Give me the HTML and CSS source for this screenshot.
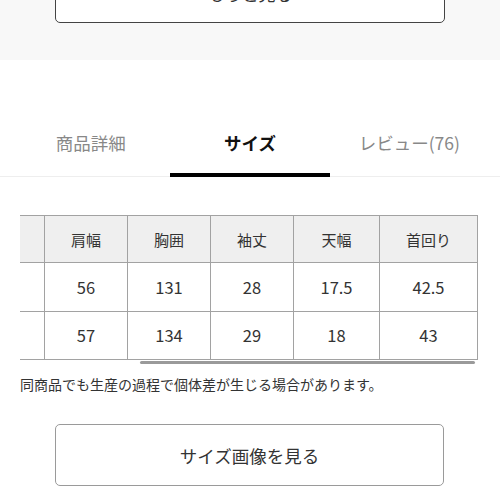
FILE: index.html
```html
<!DOCTYPE html>
<html lang="ja">
<head>
    <meta charset="UTF-8">
    <meta name="viewport" content="width=device-width, initial-scale=1.0">
    <title>サイズ</title>
    <link rel="stylesheet" href="styles.css">
</head>
<body>
    <div class="more">
        <button class="more-button">もっと見る</button>
    </div>

    <div class="tabs">
        <div class="tab">商品詳細</div>
        <div class="tab active">サイズ</div>
        <div class="tab">レビュー(76)</div>
    </div>

    <div class="size">
        <div class="table-wrap">
            <table class="size-table">
                <colgroup>
                    <col class="col-name">
                    <col class="col-a">
                    <col class="col-a">
                    <col class="col-a">
                    <col class="col-b">
                    <col class="col-c">
                </colgroup>
                <thead>
                    <tr>
                        <th></th>
                        <th>肩幅</th>
                        <th>胸囲</th>
                        <th>袖丈</th>
                        <th>天幅</th>
                        <th>首回り</th>
                    </tr>
                </thead>
                <tbody>
                    <tr>
                        <td></td>
                        <td>56</td>
                        <td>131</td>
                        <td>28</td>
                        <td>17.5</td>
                        <td>42.5</td>
                    </tr>
                    <tr>
                        <td></td>
                        <td>57</td>
                        <td>134</td>
                        <td>29</td>
                        <td>18</td>
                        <td>43</td>
                    </tr>
                </tbody>
            </table>
        </div>
        <div class="scrollbar"></div>
        <p class="note">同商品でも生産の過程で個体差が生じる場合があります。</p>
        <button class="image-button">サイズ画像を見る</button>
    </div>
</body>
</html>
```

FILE: styles.css
```css
* {
    margin: 0;
    padding: 0;
    box-sizing: border-box;
}

body {
    background-color: #ffffff;
    font-family: "Noto Sans CJK JP", "Noto Sans", sans-serif;
    color: #333333;
    width: 500px;
    overflow: hidden;
}

button {
    font-family: inherit;
    background-color: #ffffff;
    cursor: pointer;
}

/* top grey block with the cut-off button */
.more {
    background-color: #f8f8f8;
    padding: 0 55px 37px;
}

.more-button {
    display: block;
    width: 100%;
    height: 62px;
    margin-top: -39px;
    border: 1.5px solid #444444;
    border-radius: 5px;
    font-size: 17px;
    color: #333333;
    padding-top: 2px;
}

/* tabs */
.tabs {
    display: flex;
    padding: 71px 11px 0;
    border-bottom: 1px solid #eeeeee;
}

.tab {
    flex: 1;
    text-align: center;
    font-size: 17.5px;
    line-height: 24px;
    color: #888888;
    padding-bottom: 18px;
    border-bottom: 4px solid transparent;
    margin-bottom: -1px;
}

.tab.active {
    color: #111111;
    font-weight: bold;
    border-bottom-color: #000000;
}

/* size table */
.size {
    padding: 38px 20px 0;
}

.table-wrap {
    overflow: hidden;
}

.size-table {
    table-layout: fixed;
    width: 517px;
    margin-left: -60px;
    border-collapse: collapse;
}

.col-name { width: 84px; }
.col-a { width: 83px; }
.col-b { width: 86px; }
.col-c { width: 98px; }

.size-table th,
.size-table td {
    border: 1px solid #a2a2a2;
    text-align: center;
    color: #333333;
}

.size-table th {
    background-color: #efefef;
    font-weight: normal;
    font-size: 15px;
    height: 47px;
}

.size-table td {
    font-size: 16.5px;
    height: 48.5px;
}

.scrollbar {
    width: 335px;
    height: 3px;
    margin: 1px 0 0 120px;
    background-color: #9a9a9a;
    border-radius: 2px;
}

.note {
    font-size: 14px;
    line-height: 20px;
    margin-top: 10px;
    color: #333333;
}

.image-button {
    display: block;
    width: 389px;
    height: 62px;
    margin: 30px 0 0 35px;
    border: 1px solid #9a9a9a;
    border-radius: 5px;
    font-size: 17.5px;
    color: #333333;
}
```
